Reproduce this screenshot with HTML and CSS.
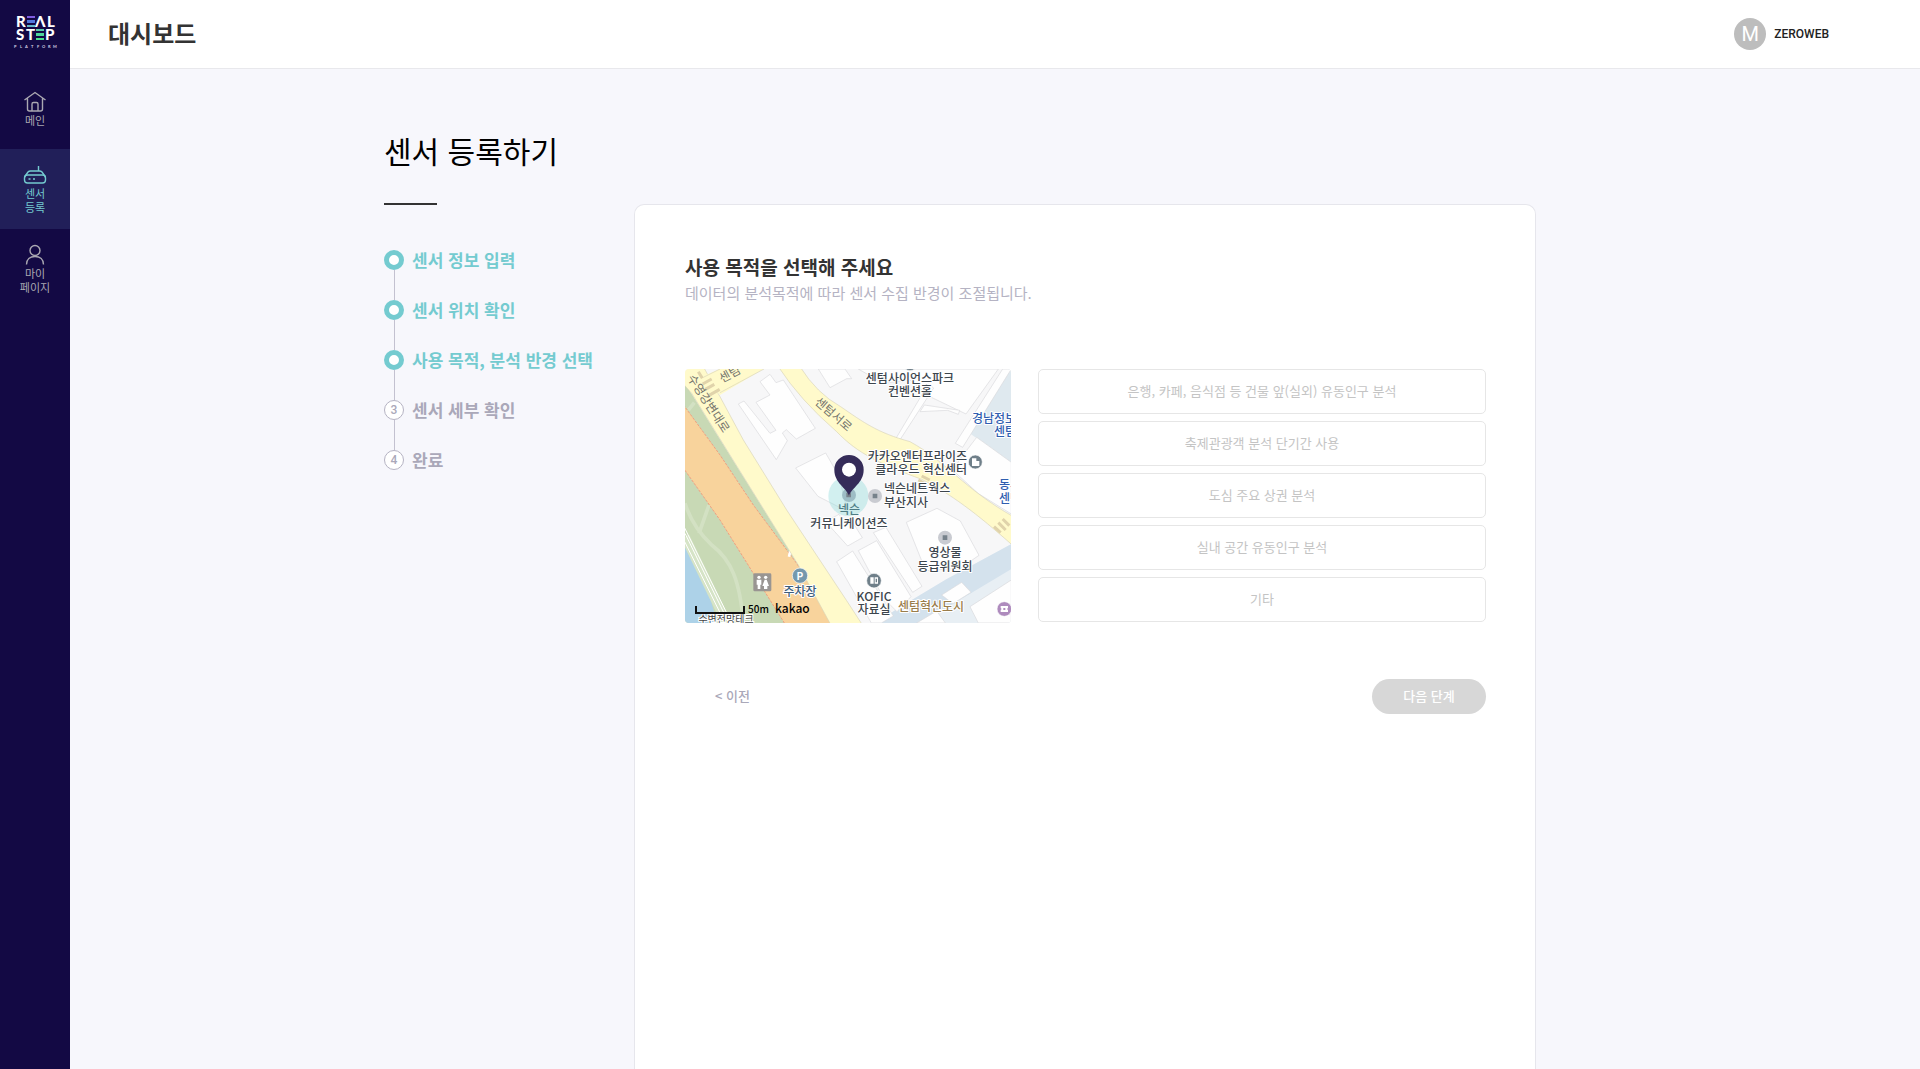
FILE: index.html
```html
<!DOCTYPE html>
<html lang="ko">
<head>
<meta charset="utf-8">
<meta name="viewport" content="width=device-width, initial-scale=1">
<title>대시보드</title>
<link rel="stylesheet" href="styles.css">
</head>
<body>
<div class="app">
  <aside class="sidebar">
    <a class="logo" href="#" aria-label="REAL STEP PLATFORM">
      <svg width="46" height="36" viewBox="0 0 46 36">
        <g class="logo-word">
          <text x="4" y="14">R</text><text x="23" y="14">Λ</text><text x="35" y="14">L</text>
          <text x="4" y="27">S</text><text x="14" y="27">T</text><text x="33" y="27">P</text>
        </g>
        <path fill="#7d5ce0" d="M15 3h8v2h-8z"/><path fill="#5078dc" d="M15 7h8v3h-8z"/><path fill="#62b9c9" d="M15 12h8v2h-8z"/>
        <path fill="#58c9a8" d="M24 16h8v2h-8z"/><path fill="#4ed69b" d="M24 20h8v3h-8z"/><path fill="#4ee08d" d="M24 25h8v2h-8z"/>
        <text class="logo-sub" y="35" x="2 8 13 19 25 30 36 41">PLATFORM</text>
      </svg>
    </a>
    <nav class="menu">
      <a class="menu-item" href="#">
        <svg class="icon" viewBox="0 0 24 24"><path d="M1.500 10 12 2.500 22.500 10M4.500 8.500V19q0 2 2 2h11q2 0 2-2V8.500M9 21v-7q0-1.500 1.500-1.500h3q1.500 0 1.500 1.500v7"/></svg>
        <span>메인</span>
      </a>
      <a class="menu-item active" href="#" aria-current="page">
        <svg class="icon" viewBox="0 0 24 24"><path d="M15.500 3v5M1.500 14 5 9q1-1 2.500-1h9Q18 8 19 9l3.500 5"/><rect x="1.500" y="12" width="21" height="8" rx="3"/><path d="M5.500 16h2M10 16h2"/></svg>
        <span>센서<br>등록</span>
      </a>
      <a class="menu-item" href="#">
        <svg class="icon" viewBox="0 0 24 24"><circle cx="12" cy="7.500" r="5"/><path d="M3.500 21.500c0-5 3.500-8 8.500-8s8.500 3 8.500 8"/></svg>
        <span>마이<br>페이지</span>
      </a>
    </nav>
  </aside>

  <div class="page">
    <header class="topbar">
      <h1>대시보드</h1>
      <div class="account"><span class="avatar">M</span><span>ZEROWEB</span></div>
    </header>

    <main class="content">
      <section class="progress">
        <h2>센서 등록하기</h2>
        <ol class="steps">
          <li class="done"><span class="dot"></span>센서 정보 입력</li>
          <li class="done"><span class="dot"></span>센서 위치 확인</li>
          <li class="done"><span class="dot"></span>사용 목적, 분석 반경 선택</li>
          <li><span class="dot">3</span>센서 세부 확인</li>
          <li><span class="dot">4</span>완료</li>
        </ol>
      </section>

      <section class="card">
        <h3>사용 목적을 선택해 주세요</h3>
        <p class="hint">데이터의 분석목적에 따라 센서 수집 반경이 조절됩니다.</p>

        <div class="choice">
          <svg class="map" viewBox="0 0 326 254" role="img" aria-label="센서 위치 지도">
            <g transform="scale(.33333) translate(-25 -27)">
              <path fill="#f7f7f8" d="M0 0h1010v800H0z"/>
              <!-- water and shaded districts -->
              <path fill="#dfe9ef" d="M985 27h19v285l-108-80-28-20z"/>
              <path fill="#e8eff4" d="m880 620 124-68v237H620z"/>
              <path fill="#d4e2ed" d="M1004 552v75L790 755l-45 34H600l60-42 150-90z"/>
              <!-- blocks -->
              <g fill="#fefefe" stroke="#d9d9dc" stroke-width="2">
                <path d="m185 132 17-9 78 97 18-9-60-84 42-22-30-40 30-22 18 25 22-8 96 145-57 32-30-28-12 10 15 23-33 57z"/>
                <path d="m357 324 90-45 40 70 25 105-88-45zM447 485l40-22 20 32 20-10 30 48-44 25z"/>
                <path d="m425 27 35 56 50-27h15l-20-29zM545 27h420L868 162 760 110l-60-50-80 10z"/>
                <path d="m480 605 48-32 122 195-36 21h-30zM545 572l55-30 103 168-42 45-40-40z"/>
                <path d="m689 487 92-42 70 38 56 103-55 38-105 8z"/>
                <path d="m590 518 38-16 108 177-28 18z"/>
                <path d="m655 240 100-168 16 12-104 160zM730 155l13-20 106 16-4 12-32-12zM978 27h26L858 262l-22-12z"/>
                <path d="m848 300 52-68 104 75v155l-100-62-74-68z"/>
              </g>
              <g fill="#fefefe" stroke="#d9d9dc" stroke-width="2">
                <path d="m795 705 60-38 28 30-54 34zM720 789l60-36 26 36zM880 740l124-80v129H905z"/>
              </g>
              <!-- riverside park and expressway -->
              <path fill="#c8d9b5" d="M25 70 365 615l105 174H25z"/>
              <g fill="none" stroke="#d3e1c3" stroke-width="11">
                <path d="m35 150 18-22M25 430q22 70 80 125c60 45 85 110 95 234M97 435l-30 85"/>
              </g>
              <path fill="#add2e8" d="M25 550q60 80 95 239H25z"/>
              <path fill="none" stroke="#d6e4c7" stroke-width="28" d="M25 530 155 800"/>
              <g fill="none" stroke="#fff" stroke-width="3"><path d="M22 500 165 789M25 520l132 270M24 545l122 245"/></g>
              <path fill="#f8d39c" stroke="#efa082" stroke-width="3" stroke-dasharray="8 4" d="m20 134 110 151 100 150 130 175 120 190H330L130 480 20 324z"/>
              <path stroke="#fff" stroke-width="8" d="m343 563-6 27M428 715l14 12"/>
              <!-- roads -->
              <path fill="#fffacb" stroke="#d9d5b8" stroke-width="2" d="M20 20h60l50 90 70 130 130 210 180 272 50 77h-95L365 615 45 100 20 72z"/>
              <path fill="#fffacb" d="m75 50 55-23h130l-130 78z"/>
              <path fill="none" stroke="#d9d5b8" stroke-width="2" d="m80 52 50-25M262 27 130 98"/>
              <path fill="#fffacb" stroke="#d9d5b8" stroke-width="2" d="M370 20q50 80 122 120c70 48 110 78 208 105 110 60 160 140 310 225v88C900 460 820 400 735 358c-120-45-190-75-255-143Q370 120 305 20z"/>
              <path stroke="#e0d3ab" stroke-width="9" d="m78 72 27-15M86 88l27-15M97 106l32-18M65 35l12 20M952 500l20 18M965 488l22 22M978 477l20 20M725 360l22 12M735 348l24 12"/>
              <!-- sensing radius and place markers -->
              <circle cx="515" cy="408" r="60" fill="#80d6d6" fill-opacity=".35"/>
              <g fill="#c9cbd1"><circle cx="517" cy="405" r="21" fill="#9dbdc5"/><circle cx="595" cy="408" r="21"/><circle cx="805" cy="533" r="21"/></g>
              <path fill="#77828b" d="M588 401h14v14h-14zM798 526h14v14h-14zM509 398h14v14h-14z"/>
              <g fill="#6f7f89" stroke="#fff" stroke-width="2"><circle cx="896" cy="306" r="21"/><circle cx="592" cy="662" r="22"/><circle cx="700" cy="10" r="22"/><circle cx="370" cy="647" r="23" fill="#7598ad"/><circle cx="983" cy="747" r="22" fill="#ae8bbd"/></g>
              <path fill="#fff" d="M886 295h13v8h9v15h-22zM581 652h10v19h-10zM594 652h10v19h-10zM972 738h22v6q-5 3 0 6v6h-22v-6q5-3 0-6z"/>
              <path fill="#6f7f89" d="M597 656h4v11h-4z"/><path fill="#ae8bbd" d="M980 744h6v6h-6z"/>
              <rect x="230" y="640" width="54" height="54" rx="4" fill="#999592"/>
              <g fill="#fff"><circle cx="247" cy="652" r="5"/><circle cx="267" cy="652" r="5"/><path d="M240 659h14v15h-3v13h-8v-13h-3zM264 659h6l7 19h-5v9h-10v-9h-5z"/></g>
              <path fill="#352c59" d="M517 407c-7-23-44-38-44-78a44 44 0 0 1 88 0c0 40-37 55-44 78z"/>
              <circle cx="517" cy="329" r="21" fill="#fff"/>
            </g>
            <g class="map-road">
              <text transform="translate(2 9) rotate(57)">수영강변대로</text>
              <text transform="translate(37 14) rotate(-28)">센텀</text>
              <text transform="translate(129 34) rotate(41)">센텀서로</text>
            </g>
            <g class="map-label">
              <g text-anchor="middle">
                <text x="225" y="14">센텀사이언스파크</text><text x="225" y="27">컨벤션홀</text>
                <text x="164" y="145" fill="#4e7c84" stroke="none">넥슨</text><text x="164" y="159">커뮤니케이션즈</text>
                <text x="260" y="188">영상물</text><text x="260" y="202">등급위원회</text>
                <text x="189" y="232">KOFIC</text><text x="189" y="245">자료실</text>
                <text x="246" y="242" fill="#9a7d4b">센텀혁신도시</text>
                <text x="115" y="227" fill="#3d5d7c">주차장</text>
              </g>
              <g text-anchor="end"><text x="282" y="92">카카오엔터프라이즈</text><text x="282" y="105">클라우드 혁신센터</text></g>
              <text x="199" y="124">넥슨네트웍스</text><text x="199" y="138">부산지사</text>
              <g fill="#2f5eb0"><text x="287" y="54">경남정보</text><text x="309" y="67">센텀</text><text x="314" y="120">동서</text><text x="314" y="134">센텀</text></g>
            </g>
            <text class="map-parking" x="115" y="211">P</text>
            <text class="map-small" x="41" y="254">수변전망테크</text>
            <path class="map-ruler" d="M11 237v7h48v-7"/>
            <text class="map-scale" x="63" y="244">50m</text>
            <text class="map-brand" x="90" y="244">kakao</text>
          </svg>

          <div class="options">
            <button type="button">은행, 카페, 음식점 등 건물 앞(실외) 유동인구 분석</button>
            <button type="button">축제관광객 분석 단기간 사용</button>
            <button type="button">도심 주요 상권 분석</button>
            <button type="button">실내 공간 유동인구 분석</button>
            <button type="button">기타</button>
          </div>
        </div>

        <div class="actions">
          <button type="button" class="prev">&lt; 이전</button>
          <button type="button" class="next">다음 단계</button>
        </div>
      </section>
    </main>
  </div>
</div>
</body>
</html>
```
FILE: styles.css
```css
* {
  box-sizing: border-box;
}

body {
  margin: 0;
  background: #f7f7fc;
  color: #333;
  font-family: "Noto Sans CJK KR", sans-serif;
}

h1, h2, h3, p, ol {
  margin: 0;
  padding: 0;
}

button {
  font-family: inherit;
  cursor: pointer;
}

.app {
  display: flex;
  min-height: 100vh;
}

/* Sidebar */
.sidebar {
  flex: none;
  width: 70px;
  background: #130944;
}

.logo {
  display: flex;
  justify-content: center;
  height: 69px;
  padding-top: 13px;
}

.logo-word {
  fill: #fff;
  font: 900 15px Lato, sans-serif;
}

.logo-sub {
  fill: #d5d2e4;
  font: 700 4px Lato, sans-serif;
}

.menu-item {
  display: flex;
  flex-direction: column;
  align-items: center;
  justify-content: center;
  height: 80px;
  padding-bottom: 1px;
  color: #aaa8b2;
  font-size: 11px;
  line-height: 14px;
  text-align: center;
  text-decoration: none;
}

.menu-item span {
  margin-top: -1px;
}

.menu-item.active {
  background: #211f59;
  color: #74cbd0;
}

.icon {
  width: 24px;
  height: 24px;
  fill: none;
  stroke: currentColor;
  stroke-width: 1.4;
}

/* Header */
.page {
  flex: 1;
  min-width: 0;
  display: flex;
  flex-direction: column;
}

.topbar {
  display: flex;
  align-items: center;
  justify-content: space-between;
  height: 69px;
  padding: 0 91px 0 38px;
  background: #fff;
  border-bottom: 1px solid #e8e8ec;
}

.topbar h1 {
  padding-bottom: 2px;
  font-size: 24px;
  font-weight: 700;
  line-height: 36px;
}

.account {
  display: flex;
  align-items: center;
  gap: 8px;
  color: #222;
  font: 500 12px Roboto, sans-serif;
}

.avatar {
  width: 32px;
  height: 32px;
  border-radius: 50%;
  background: #bdbdbd;
  color: #fff;
  font-size: 20px;
  font-weight: 400;
  line-height: 32px;
  text-align: center;
}

/* Content */
.content {
  flex: 1;
  display: grid;
  grid-template-columns: 250px 1fr;
  width: 60vw;
  margin-left: calc(20vw - 70px);
}

.progress {
  padding-top: 59px;
}

.progress h2 {
  color: #000;
  font-size: 30px;
  font-weight: 400;
  line-height: 44px;
}

.progress h2::after {
  content: "";
  display: block;
  width: 53px;
  height: 2px;
  margin-top: 31px;
  background: #333;
}

.steps {
  display: grid;
  gap: 30px;
  margin-top: 45px;
  list-style: none;
}

.steps li {
  position: relative;
  display: flex;
  align-items: center;
  gap: 8px;
  color: #aaa8b9;
  font-size: 17px;
  font-weight: 700;
  line-height: 20px;
  white-space: nowrap;
}

.steps li + li::before {
  content: "";
  position: absolute;
  left: 10px;
  bottom: 100%;
  width: 1px;
  height: 30px;
  background: #c3c1d0;
}

.dot {
  width: 20px;
  height: 20px;
  border: 1px solid #b5b3c3;
  border-radius: 50%;
  background: #fff;
  font: 500 12px/18px Roboto, sans-serif;
  text-align: center;
}

.steps .done {
  color: #74cbd0;
}

.done .dot {
  border: 5px solid #74cbd0;
}

.card {
  margin-top: 135px;
  padding: 48px 49px 48px 50px;
  background: #fff;
  border: 1px solid #e6e6ec;
  border-bottom: 0;
  border-radius: 10px 10px 0 0;
}

.card h3 {
  font-size: 19px;
  font-weight: 700;
  line-height: 28px;
}

.hint {
  color: #b5b3c3;
  font-size: 15px;
  line-height: 24px;
}

.choice {
  display: flex;
  gap: 27px;
  margin-top: 64px;
}

.map {
  flex: none;
  width: 326px;
  height: 254px;
  border-radius: 4px;
}

.map-label {
  fill: #3c454d;
  stroke: #fff;
  stroke-width: 2px;
  stroke-linejoin: round;
  paint-order: stroke;
  font-size: 12px;
  font-weight: 500;
}

.map-road {
  fill: #73736b;
  font-size: 12px;
}

.map-parking {
  fill: #fff;
  font: 700 10px Roboto, sans-serif;
  text-anchor: middle;
}

.map-small {
  fill: #444;
  stroke: #fff;
  stroke-width: 2px;
  paint-order: stroke;
  font-size: 10px;
  text-anchor: middle;
}

.map-ruler {
  fill: none;
  stroke: #111;
  stroke-width: 2px;
}

.map-scale {
  font-size: 10px;
  font-weight: 500;
}

.map-brand {
  font-size: 12px;
  font-weight: 500;
}

.options {
  flex: 1;
  display: grid;
  align-content: start;
  gap: 7px;
}

.options button {
  height: 45px;
  padding: 0 16px 2px;
  border: 1px solid #e6e6e6;
  border-radius: 5px;
  background: #fff;
  color: #c4c4c4;
  font-size: 13px;
  line-height: 20px;
}

.actions {
  display: flex;
  justify-content: space-between;
  margin-top: 56px;
}

.actions button {
  height: 35px;
  border: 0;
  border-radius: 18px;
  font-size: 13px;
  font-weight: 500;
  line-height: 20px;
}

.actions .prev {
  padding: 0 30px 2px;
  background: none;
  color: #aaa8b9;
}

.actions .next {
  width: 114px;
  padding: 0 0 2px;
  background: #d7d7d7;
  color: #fff;
}
```
